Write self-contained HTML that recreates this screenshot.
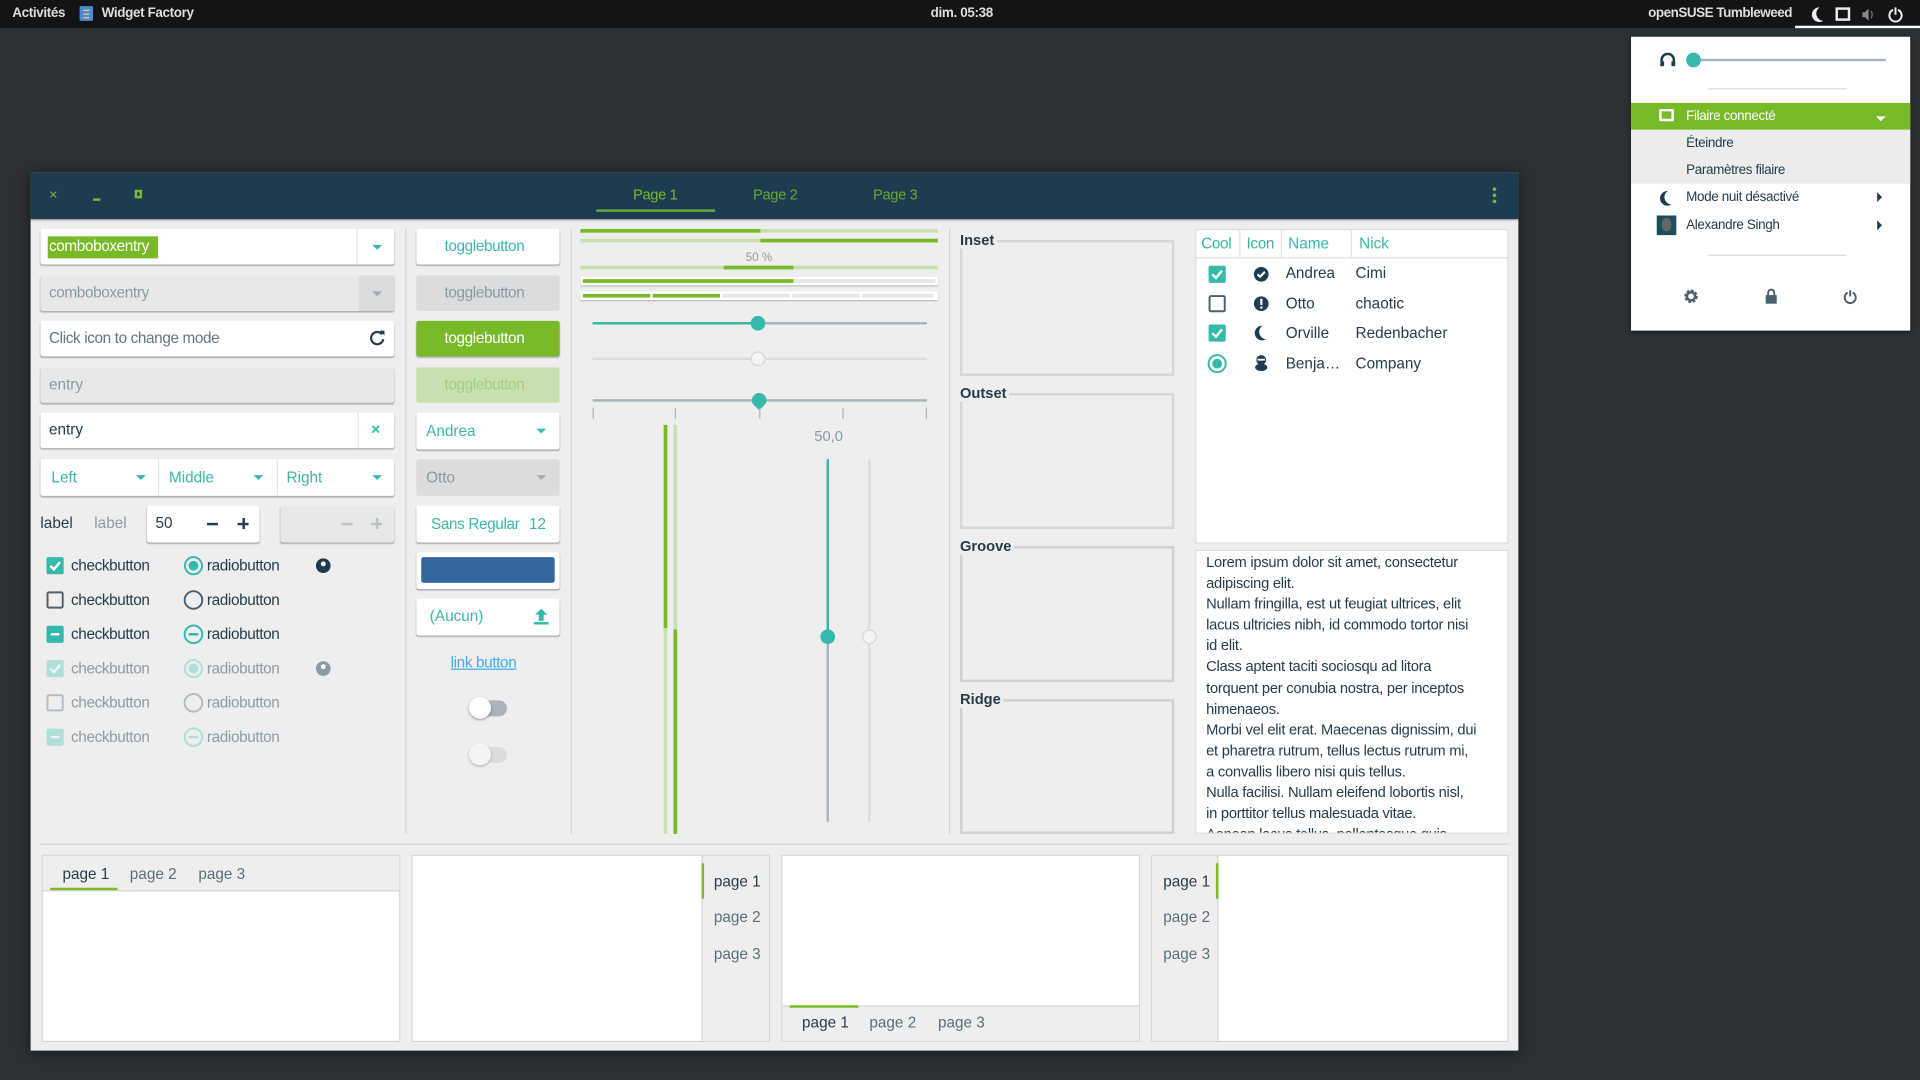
<!DOCTYPE html>
<html><head><meta charset="utf-8"><style>
*{box-sizing:border-box;margin:0;padding:0}
html,body{width:1920px;height:1080px;overflow:hidden;background:#2c3134}
#s{position:absolute;left:0;top:0;width:1568px;height:882px;transform:scale(1.22449);transform-origin:0 0;font-family:"Liberation Sans",sans-serif;font-size:12px;color:#243c4b}
.a{position:absolute}
.t{position:absolute;white-space:nowrap;line-height:1}
.en{position:absolute;background:#fff;box-shadow:0 1px 1px rgba(0,0,0,.28);border-radius:2px}
.dis{background:#e8e8e8}
.tl{color:#3bb6a8}
.g{color:#8a9aa3}
.arr{position:absolute;width:0;height:0;border-left:4px solid transparent;border-right:4px solid transparent;border-top:4px solid #3bb6a8}
.vs{position:absolute;width:1px;background:#d2d4d5}
.fr{position:absolute;border:2px solid #d0d0d0;left:784px;width:175px}
.fl{position:absolute;left:784px;font-weight:bold;font-size:12px;background:#eee;padding-right:2px}
</style></head><body><div id="s">
<!-- top bar -->
<div class="a" style="left:0;top:0;width:1568px;height:23px;background:#121416"></div>
<div class="t" style="left:10px;top:6px;color:#ddd;font-size:11px;font-weight:bold;letter-spacing:-0.3px">Activités</div>
<div class="a" style="left:65px;top:5px;width:11px;height:12px;background:#4a8ad6;border-radius:1px"></div>
<div class="a" style="left:68px;top:8px;width:5px;height:1px;background:#f3d36b;box-shadow:0 3px 0 #f3d36b,0 6px 0 #f3d36b"></div>
<div class="t" style="left:83px;top:6px;color:#ddd;font-size:11px;font-weight:bold;letter-spacing:-0.3px">Widget Factory</div>
<div class="t" style="left:760px;top:6px;color:#ddd;font-size:11px;font-weight:bold;letter-spacing:-0.3px">dim. 05:38</div>
<div class="t" style="left:1346px;top:6px;color:#ddd;font-size:11px;font-weight:bold;letter-spacing:-0.4px">openSUSE Tumbleweed</div>
<svg class="a" style="left:1476px;top:4px" width="90" height="16"><path d="M10 2a6 6 0 1 0 3 11A6 6 0 0 1 10 2z" fill="#eee"/><rect x="24" y="3" width="10" height="9" fill="none" stroke="#eee" stroke-width="2"/><path d="M45 6h2l3-3v10l-3-3h-2z" fill="#888"/><path d="M52 5q2 3 0 6" stroke="#777" fill="none"/><path d="M70 4a5 5 0 1 0 4 0" stroke="#eee" stroke-width="1.6" fill="none"/><path d="M72 2v6" stroke="#eee" stroke-width="1.6"/></svg>
<div class="a" style="left:1466px;top:21px;width:102px;height:2px;background:#fff"></div>

<!-- window -->
<div class="a" style="left:25px;top:141px;width:1215px;height:717px;background:#eeeeee;box-shadow:0 2px 12px rgba(0,0,0,.5)"></div>
<div class="a" style="left:25px;top:141px;width:1215px;height:38px;background:#1b3d4f;box-shadow:0 1px 2px rgba(0,0,0,.3)"></div>
<div class="t" style="left:40px;top:153px;color:#79b93a;font-size:12px">×</div>
<div class="a" style="left:76px;top:162px;width:6px;height:2px;background:#79b93a"></div>
<div class="a" style="left:110px;top:155px;width:6px;height:7px;border:2px solid #79b93a"></div>
<div class="t" style="left:517px;top:153px;color:#79b93a;font-size:12px;letter-spacing:-0.3px">Page 1</div>
<div class="t" style="left:615px;top:153px;color:#6da33a;font-size:12px;letter-spacing:-0.3px">Page 2</div>
<div class="t" style="left:713px;top:153px;color:#6da33a;font-size:12px;letter-spacing:-0.3px">Page 3</div>
<div class="a" style="left:487px;top:171px;width:97px;height:2px;background:#6fa83a"></div>
<div class="a" style="left:1219px;top:153px;width:3px;height:3px;background:#79b93a;box-shadow:0 5px 0 #79b93a,0 10px 0 #79b93a;border-radius:50%"></div>

<!-- col1 -->
<div class="en" style="left:33px;top:187px;width:289px;height:29px"></div>
<div class="a" style="left:39px;top:193px;width:90px;height:18px;background:#78b928"></div>
<div class="t" style="left:40px;top:195px;color:#fff;font-size:12.5px;letter-spacing:-0.3px">comboboxentry</div>
<div class="a" style="left:291px;top:187px;width:1px;height:29px;background:#e4e4e4"></div>
<div class="arr" style="left:304px;top:200px"></div>

<div class="en dis" style="left:33px;top:225px;width:289px;height:29px"></div>
<div class="a" style="left:293px;top:225px;width:29px;height:29px;background:#dadcdd"></div>
<div class="t g" style="left:40px;top:233px;font-size:12.5px;letter-spacing:-0.3px">comboboxentry</div>
<div class="arr" style="left:304px;top:238px;border-top-color:#a4acb1"></div>

<div class="en" style="left:33px;top:262px;width:289px;height:29px"></div>
<div class="t" style="left:40px;top:270px;font-size:12.5px;color:#657580;letter-spacing:-0.3px">Click icon to change mode</div>
<svg class="a" style="left:301px;top:269px" width="14" height="14"><path d="M11 4A5 5 0 1 0 12 8" stroke="#243c4b" stroke-width="1.8" fill="none"/><path d="M9 1l4 0 0 4z" fill="#243c4b"/></svg>

<div class="en dis" style="left:33px;top:300px;width:289px;height:29px"></div>
<div class="t g" style="left:40px;top:308px;font-size:12.5px">entry</div>

<div class="en" style="left:33px;top:337px;width:289px;height:29px"></div>
<div class="a" style="left:292px;top:337px;width:1px;height:29px;background:#e4e4e4"></div>
<div class="t" style="left:40px;top:345px;font-size:12.5px">entry</div>
<div class="t tl" style="left:303px;top:344px;font-size:13px;font-weight:bold">×</div>

<div class="en" style="left:33px;top:375px;width:289px;height:30px"></div>
<div class="a" style="left:129px;top:375px;width:1px;height:30px;background:#e4e4e4"></div>
<div class="a" style="left:226px;top:375px;width:1px;height:30px;background:#e4e4e4"></div>
<div class="t tl" style="left:42px;top:384px;font-size:12.5px">Left</div><div class="arr" style="left:111px;top:388px"></div>
<div class="t tl" style="left:138px;top:384px;font-size:12.5px">Middle</div><div class="arr" style="left:207px;top:388px"></div>
<div class="t tl" style="left:234px;top:384px;font-size:12.5px">Right</div><div class="arr" style="left:304px;top:388px"></div>

<div class="t" style="left:33px;top:421px;font-size:12.5px">label</div>
<div class="t g" style="left:77px;top:421px;font-size:12.5px">label</div>
<div class="en" style="left:120px;top:413px;width:92px;height:30px"></div>
<div class="t" style="left:127px;top:421px;font-size:12.5px">50</div>
<div class="a" style="left:169px;top:427px;width:9px;height:1.5px;background:#243c4b"></div>
<div class="a" style="left:194px;top:427px;width:9px;height:1.5px;background:#243c4b"></div><div class="a" style="left:198px;top:423px;width:1.5px;height:9px;background:#243c4b"></div>
<div class="en dis" style="left:229px;top:413px;width:93px;height:30px"></div>
<div class="a" style="left:279px;top:427px;width:9px;height:1.5px;background:#bcc3c7"></div>
<div class="a" style="left:303px;top:427px;width:9px;height:1.5px;background:#bcc3c7"></div><div class="a" style="left:307px;top:423px;width:1.5px;height:9px;background:#bcc3c7"></div>

<!-- checks -->
<svg class="a" style="left:36px;top:453px" width="250" height="160">
<g font-family="Liberation Sans" font-size="12.5" fill="#243c4b" letter-spacing="-0.3">
<rect x="2" y="2" width="14" height="14" rx="1.5" fill="#35b9ab"/><path d="M5 9l3 3 5-6" stroke="#fff" stroke-width="2" fill="none"/>
<text x="22" y="13">checkbutton</text>
<circle cx="122" cy="9" r="7" fill="none" stroke="#35b9ab" stroke-width="1.6"/><circle cx="122" cy="9" r="4" fill="#35b9ab"/>
<text x="133" y="13">radiobutton</text>
<circle cx="228" cy="9" r="6" fill="#1b3d4f"/><circle cx="228" cy="7.5" r="2" fill="#fff"/>
<rect x="2.8" y="30.8" width="12.4" height="12.4" rx="1" fill="none" stroke="#4a6170" stroke-width="1.6"/><text x="22" y="41">checkbutton</text>
<circle cx="122" cy="37" r="7.2" fill="none" stroke="#4a6170" stroke-width="1.6"/><text x="133" y="41">radiobutton</text>
<rect x="2" y="58" width="14" height="14" rx="1.5" fill="#35b9ab"/><rect x="5.5" y="64" width="7" height="2" fill="#fff"/><text x="22" y="69">checkbutton</text>
<circle cx="122" cy="65" r="7.2" fill="none" stroke="#35b9ab" stroke-width="1.6"/><rect x="118" y="64" width="8" height="2" fill="#35b9ab"/><text x="133" y="69">radiobutton</text>
</g>
<g font-family="Liberation Sans" font-size="12.5" fill="#8d9ca4" letter-spacing="-0.3">
<rect x="2" y="86" width="14" height="14" rx="1.5" fill="#b0ded8"/><path d="M5 93l3 3 5-6" stroke="#e8f6f4" stroke-width="2" fill="none"/><text x="22" y="97">checkbutton</text>
<circle cx="122" cy="93" r="7" fill="none" stroke="#b0ded8" stroke-width="1.6"/><circle cx="122" cy="93" r="4" fill="#b0ded8"/><text x="133" y="97">radiobutton</text>
<circle cx="228" cy="93" r="6" fill="#8a9ba3"/><circle cx="228" cy="91.5" r="2" fill="#fff"/>
<rect x="2.8" y="114.8" width="12.4" height="12.4" rx="1" fill="none" stroke="#b3bcc1" stroke-width="1.6"/><text x="22" y="125">checkbutton</text>
<circle cx="122" cy="121" r="7.2" fill="none" stroke="#b3bcc1" stroke-width="1.6"/><text x="133" y="125">radiobutton</text>
<rect x="2" y="142" width="14" height="14" rx="1.5" fill="#b0ded8"/><rect x="5.5" y="148" width="7" height="2" fill="#e8f6f4"/><text x="22" y="153">checkbutton</text>
<circle cx="122" cy="149" r="7.2" fill="none" stroke="#b0ded8" stroke-width="1.6"/><rect x="118" y="148" width="8" height="2" fill="#b0ded8"/><text x="133" y="153">radiobutton</text>
</g></svg>

<div class="vs" style="left:331px;top:187px;height:494px"></div>
<div class="vs" style="left:466px;top:187px;height:494px"></div>
<div class="vs" style="left:775px;top:187px;height:494px"></div>

<!-- col2 -->
<div class="en" style="left:340px;top:187px;width:117px;height:29px"></div><div class="t tl" style="left:363px;top:195px;font-size:12.5px;letter-spacing:-0.3px">togglebutton</div>
<div class="a" style="left:340px;top:225px;width:117px;height:29px;background:#dadcdd;border-radius:2px"></div><div class="t g" style="left:363px;top:233px;font-size:12.5px;letter-spacing:-0.3px">togglebutton</div>
<div class="a" style="left:340px;top:262px;width:117px;height:29px;background:#78b928;border-radius:2px;box-shadow:0 1px 1px rgba(0,0,0,.25)"></div><div class="t" style="left:363px;top:270px;font-size:12.5px;color:#fff;letter-spacing:-0.3px">togglebutton</div>
<div class="a" style="left:340px;top:300px;width:117px;height:29px;background:#c8e0b0;border-radius:2px"></div><div class="t" style="left:363px;top:308px;font-size:12.5px;color:#a3cf7a;letter-spacing:-0.3px">togglebutton</div>
<div class="en" style="left:340px;top:337px;width:117px;height:30px"></div><div class="t tl" style="left:348px;top:346px;font-size:12.5px">Andrea</div><div class="arr" style="left:438px;top:350px"></div>
<div class="a" style="left:340px;top:375px;width:117px;height:30px;background:#dadcdd;border-radius:2px"></div><div class="t g" style="left:348px;top:384px;font-size:12.5px">Otto</div><div class="arr" style="left:438px;top:388px;border-top-color:#a4acb1"></div>
<div class="en" style="left:340px;top:413px;width:117px;height:30px"></div><div class="t tl" style="left:352px;top:422px;font-size:12.5px;letter-spacing:-0.3px">Sans Regular</div><div class="t tl" style="left:432px;top:422px;font-size:12.5px">12</div>
<div class="en" style="left:340px;top:451px;width:117px;height:30px"></div><div class="a" style="left:344px;top:455px;width:109px;height:21px;background:#3467a0;border-radius:2px"></div>
<div class="en" style="left:340px;top:489px;width:117px;height:30px"></div><div class="t tl" style="left:351px;top:497px;font-size:12.5px">(Aucun)</div>
<svg class="a" style="left:435px;top:496px" width="14" height="16"><path d="M7 1l-5 5h3v5h4V6h3z" fill="#35b9ab"/><rect x="1" y="12" width="12" height="2" fill="#35b9ab"/></svg>
<div class="t" style="left:368px;top:535px;font-size:12.5px;color:#3daee9;text-decoration:underline;letter-spacing:-0.3px">link button</div>
<div class="a" style="left:384px;top:572px;width:30px;height:13px;border-radius:7px;background:#a9b4ba"></div><div class="a" style="left:383px;top:569px;width:18px;height:18px;border-radius:50%;background:#fff;box-shadow:0 1px 2px rgba(0,0,0,.35)"></div>
<div class="a" style="left:384px;top:610px;width:30px;height:13px;border-radius:7px;background:#dadcdd"></div><div class="a" style="left:383px;top:607px;width:18px;height:18px;border-radius:50%;background:#f4f4f4;box-shadow:0 1px 2px rgba(0,0,0,.25)"></div>

<!-- col3 -->
<div class="a" style="left:474px;top:187px;width:292px;height:3px;background:#c9e0b2"></div><div class="a" style="left:474px;top:187px;width:147px;height:3px;background:#78b928"></div>
<div class="a" style="left:474px;top:195px;width:292px;height:3px;background:#c9e0b2"></div><div class="a" style="left:621px;top:195px;width:145px;height:3px;background:#78b928"></div>
<div class="t" style="left:609px;top:206px;font-size:9.5px;color:#8a9aa3">50 %</div>
<div class="a" style="left:474px;top:217px;width:292px;height:3px;background:#c9e0b2"></div><div class="a" style="left:591px;top:217px;width:57px;height:3px;background:#78b928"></div>
<div class="a" style="left:474px;top:226px;width:292px;height:7px;background:#fff;box-shadow:0 1px 1px rgba(0,0,0,.25)"></div><div class="a" style="left:476px;top:228px;width:288px;height:3px;background:#e4e6e7"></div><div class="a" style="left:476px;top:228px;width:172px;height:3px;background:#78b928"></div>
<div class="a" style="left:474px;top:238px;width:292px;height:7px;background:#fff;box-shadow:0 1px 1px rgba(0,0,0,.25)"></div>
<div class="a" style="left:476px;top:240px;width:55px;height:3px;background:#78b928"></div><div class="a" style="left:533px;top:240px;width:55px;height:3px;background:#78b928"></div>
<div class="a" style="left:590px;top:240px;width:55px;height:3px;background:#e4e6e7"></div><div class="a" style="left:647px;top:240px;width:55px;height:3px;background:#e4e6e7"></div><div class="a" style="left:704px;top:240px;width:58px;height:3px;background:#e4e6e7"></div>
<div class="a" style="left:484px;top:263px;width:273px;height:2px;background:#a9b4ba"></div><div class="a" style="left:484px;top:263px;width:135px;height:2px;background:#35b9ab"></div>
<div class="a" style="left:613px;top:258px;width:12px;height:12px;border-radius:50%;background:#35b9ab"></div>
<div class="a" style="left:484px;top:292px;width:273px;height:2px;background:#dadcdd"></div>
<div class="a" style="left:613px;top:287px;width:12px;height:12px;border-radius:50%;background:#f4f4f4;border:1.5px solid #d4d7d9"></div>
<div class="a" style="left:484px;top:326px;width:273px;height:2px;background:#a9b4ba"></div>
<svg class="a" style="left:612px;top:320px" width="16" height="16"><path d="M8 1a6 6 0 0 1 6 6c0 3-3 5-6 8-3-3-6-5-6-8a6 6 0 0 1 6-6z" fill="#35b9ab"/></svg>
<div class="a" style="left:484px;top:333px;width:1px;height:9px;background:#a9b4ba;box-shadow:67px 0 0 #a9b4ba,136px 0 0 #a9b4ba,204px 0 0 #a9b4ba,272px 0 0 #a9b4ba"></div>
<div class="t" style="left:665px;top:350px;font-size:12px;color:#8a9aa3">50,0</div>
<div class="a" style="left:542px;top:347px;width:3px;height:334px;background:#c9e0b2"></div><div class="a" style="left:542px;top:347px;width:3px;height:166px;background:#78b928"></div>
<div class="a" style="left:550px;top:347px;width:3px;height:334px;background:#c9e0b2"></div><div class="a" style="left:550px;top:514px;width:3px;height:167px;background:#78b928"></div>
<div class="a" style="left:675px;top:375px;width:2px;height:296px;background:#a9b4ba"></div><div class="a" style="left:675px;top:375px;width:2px;height:145px;background:#35b9ab"></div>
<div class="a" style="left:670px;top:514px;width:12px;height:12px;border-radius:50%;background:#35b9ab"></div>
<div class="a" style="left:709px;top:375px;width:2px;height:296px;background:#dadcdd"></div>
<div class="a" style="left:704px;top:514px;width:12px;height:12px;border-radius:50%;background:#f4f4f4;border:1.5px solid #d4d7d9"></div>

<!-- frames -->
<div class="fr" style="top:196px;height:111px;border-color:#d6d6d6"></div><div class="fl" style="top:189px">Inset</div>
<div class="fr" style="top:321px;height:111px;border-color:#d6d6d6"></div><div class="fl" style="top:314px">Outset</div>
<div class="fr" style="top:446px;height:111px"></div><div class="fl" style="top:439px">Groove</div>
<div class="fr" style="top:571px;height:110px"></div><div class="fl" style="top:564px">Ridge</div>

<!-- tree -->
<div class="a" style="left:976px;top:187px;width:256px;height:257px;background:#fff;border:1px solid #dcdcdc"></div>
<div class="a" style="left:976px;top:210px;width:256px;height:1px;background:#dcdcdc"></div>
<div class="a" style="left:1012px;top:188px;width:1px;height:22px;background:#e2e2e2;box-shadow:34px 0 0 #e2e2e2,91px 0 0 #e2e2e2"></div>
<div class="t tl" style="left:981px;top:193px;font-size:12.5px;letter-spacing:-0.3px">Cool</div><div class="t tl" style="left:1018px;top:193px;font-size:12.5px;letter-spacing:-0.3px">Icon</div><div class="t tl" style="left:1052px;top:193px;font-size:12.5px">Name</div><div class="t tl" style="left:1110px;top:193px;font-size:12.5px">Nick</div>
<svg class="a" style="left:985px;top:214px" width="60" height="92">
<rect x="2" y="3" width="14" height="14" rx="1.5" fill="#35b9ab"/><path d="M5 10l3 3 5-6" stroke="#fff" stroke-width="2" fill="none"/>
<circle cx="45" cy="10" r="6" fill="#1b3d4f"/><path d="M42 10l2 2 4-4" stroke="#fff" stroke-width="1.8" fill="none"/>
<rect x="2.8" y="27.8" width="12.4" height="12.4" rx="1" fill="none" stroke="#4a6170" stroke-width="1.6"/>
<circle cx="45" cy="34" r="6" fill="#1b3d4f"/><rect x="44.2" y="30" width="1.8" height="5" fill="#fff"/><rect x="44.2" y="36.3" width="1.8" height="1.8" fill="#fff"/>
<rect x="2" y="51" width="14" height="14" rx="1.5" fill="#35b9ab"/><path d="M5 58l3 3 5-6" stroke="#fff" stroke-width="2" fill="none"/>
<path d="M46 52a6 6 0 1 0 3 11A6 6 0 0 1 46 52z" fill="#1b3d4f"/>
<circle cx="9" cy="83" r="7" fill="none" stroke="#35b9ab" stroke-width="1.6"/><circle cx="9" cy="83" r="4" fill="#35b9ab"/>
<circle cx="45" cy="80" r="4" fill="#1b3d4f"/><ellipse cx="45" cy="86" rx="5" ry="3" fill="#1b3d4f"/><rect x="42" y="79" width="6" height="1.5" fill="#fff"/>
</svg>
<div class="t" style="left:1050px;top:217px;font-size:12.5px">Andrea</div><div class="t" style="left:1107px;top:217px;font-size:12.5px">Cimi</div>
<div class="t" style="left:1050px;top:242px;font-size:12.5px">Otto</div><div class="t" style="left:1107px;top:242px;font-size:12.5px">chaotic</div>
<div class="t" style="left:1050px;top:266px;font-size:12.5px">Orville</div><div class="t" style="left:1107px;top:266px;font-size:12.5px">Redenbacher</div>
<div class="t" style="left:1050px;top:291px;font-size:12.5px">Benja…</div><div class="t" style="left:1107px;top:291px;font-size:12.5px">Company</div>

<div class="a" style="left:976px;top:449px;width:256px;height:232px;background:#fff;border:1px solid #dcdcdc;overflow:hidden">
<div style="position:absolute;left:8px;top:1px;width:240px;font-size:12px;line-height:17.1px;color:#243c4b;letter-spacing:-0.2px">Lorem ipsum dolor sit amet, consectetur adipiscing elit.<br>Nullam fringilla, est ut feugiat ultrices, elit<br>lacus ultricies nibh, id commodo tortor nisi<br>id elit.<br>Class aptent taciti sociosqu ad litora<br>torquent per conubia nostra, per inceptos<br>himenaeos.<br>Morbi vel elit erat. Maecenas dignissim, dui<br>et pharetra rutrum, tellus lectus rutrum mi,<br>a convallis libero nisi quis tellus.<br>Nulla facilisi. Nullam eleifend lobortis nisl,<br>in porttitor tellus malesuada vitae.<br>Aenean lacus tellus, pellentesque quis</div></div>

<div class="a" style="left:33px;top:689px;width:1199px;height:1px;background:#d2d4d5"></div>

<!-- notebooks -->
<div class="a" style="left:34px;top:698px;width:293px;height:153px;background:#fff;border:1px solid #d6d6d6"></div>
<div class="a" style="left:35px;top:699px;width:291px;height:29px;background:#eee;border-bottom:1px solid #d6d6d6"></div>
<div class="a" style="left:41px;top:725px;width:55px;height:2px;background:#78b928"></div>
<div class="t" style="left:51px;top:708px;font-size:12.5px">page 1</div><div class="t" style="left:106px;top:708px;font-size:12.5px;color:#5a6e7a">page 2</div><div class="t" style="left:162px;top:708px;font-size:12.5px;color:#5a6e7a">page 3</div>

<div class="a" style="left:336px;top:698px;width:293px;height:153px;background:#fff;border:1px solid #d6d6d6"></div>
<div class="a" style="left:573px;top:699px;width:55px;height:151px;background:#eee;border-left:1px solid #d6d6d6"></div>
<div class="a" style="left:573px;top:705px;width:2px;height:29px;background:#78b928"></div>
<div class="t" style="left:583px;top:714px;font-size:12.5px">page 1</div><div class="t" style="left:583px;top:743px;font-size:12.5px;color:#5a6e7a">page 2</div><div class="t" style="left:583px;top:773px;font-size:12.5px;color:#5a6e7a">page 3</div>

<div class="a" style="left:638px;top:698px;width:293px;height:153px;background:#fff;border:1px solid #d6d6d6"></div>
<div class="a" style="left:639px;top:821px;width:291px;height:29px;background:#eee;border-top:1px solid #d6d6d6"></div>
<div class="a" style="left:645px;top:821px;width:56px;height:2px;background:#78b928"></div>
<div class="t" style="left:655px;top:829px;font-size:12.5px">page 1</div><div class="t" style="left:710px;top:829px;font-size:12.5px;color:#5a6e7a">page 2</div><div class="t" style="left:766px;top:829px;font-size:12.5px;color:#5a6e7a">page 3</div>

<div class="a" style="left:940px;top:698px;width:292px;height:153px;background:#fff;border:1px solid #d6d6d6"></div>
<div class="a" style="left:941px;top:699px;width:54px;height:151px;background:#eee;border-right:1px solid #d6d6d6"></div>
<div class="a" style="left:993px;top:705px;width:2px;height:29px;background:#78b928"></div>
<div class="t" style="left:950px;top:714px;font-size:12.5px">page 1</div><div class="t" style="left:950px;top:743px;font-size:12.5px;color:#5a6e7a">page 2</div><div class="t" style="left:950px;top:773px;font-size:12.5px;color:#5a6e7a">page 3</div>

<!-- popover -->
<div class="a" style="left:1332px;top:30px;width:228px;height:240px;background:#fff;box-shadow:0 1px 4px rgba(0,0,0,.5)"></div>
<svg class="a" style="left:1355px;top:43px" width="14" height="12"><path d="M2 11V6a5 5 0 0 1 10 0v5" stroke="#1b3d4f" stroke-width="2" fill="none"/><rect x="1" y="7" width="3" height="4" fill="#1b3d4f"/><rect x="10" y="7" width="3" height="4" fill="#1b3d4f"/></svg>
<div class="a" style="left:1384px;top:48px;width:156px;height:2px;background:#a9b4ba"></div>
<div class="a" style="left:1377px;top:43px;width:12px;height:12px;border-radius:50%;background:#35b9ab"></div>
<div class="a" style="left:1395px;top:72px;width:113px;height:1px;background:#dadcdd"></div>
<div class="a" style="left:1332px;top:84px;width:228px;height:22px;background:#78b928"></div>
<div class="a" style="left:1355px;top:89px;width:12px;height:10px;border:2px solid #fff;border-radius:1px"></div>
<div class="t" style="left:1377px;top:90px;color:#fff;font-size:11px;letter-spacing:-0.3px">Filaire connecté</div>
<div class="arr" style="left:1532px;top:95px;border-top-color:#fff"></div>
<div class="a" style="left:1332px;top:106px;width:228px;height:44px;background:#ececec"></div>
<div class="t" style="left:1377px;top:112px;font-size:11px;letter-spacing:-0.3px">Éteindre</div>
<div class="t" style="left:1377px;top:134px;font-size:11px;letter-spacing:-0.3px">Paramètres filaire</div>
<svg class="a" style="left:1354px;top:155px" width="12" height="14"><path d="M8 1a6 6 0 1 0 3 11A6 6 0 0 1 8 1z" fill="#1b3d4f"/></svg>
<div class="t" style="left:1377px;top:156px;font-size:11px;letter-spacing:-0.3px">Mode nuit désactivé</div>
<div class="a" style="left:1533px;top:157px;border-top:4px solid transparent;border-bottom:4px solid transparent;border-left:4px solid #1b3d4f"></div>
<div class="a" style="left:1353px;top:176px;width:16px;height:16px;background:#1e4d5a"><div style="position:absolute;left:4px;top:2px;width:8px;height:11px;border-radius:45%;background:#666"></div></div>
<div class="t" style="left:1377px;top:179px;font-size:11px;letter-spacing:-0.3px">Alexandre Singh</div>
<div class="a" style="left:1533px;top:180px;border-top:4px solid transparent;border-bottom:4px solid transparent;border-left:4px solid #1b3d4f"></div>
<div class="a" style="left:1395px;top:208px;width:113px;height:1px;background:#dadcdd"></div>
<svg class="a" style="left:1374px;top:235px" width="150" height="14"><circle cx="7" cy="7" r="4" fill="none" stroke="#4a6170" stroke-width="3" stroke-dasharray="2 1.1"/><circle cx="7" cy="7" r="3.3" fill="none" stroke="#4a6170" stroke-width="2"/><rect x="68" y="6" width="9" height="7" fill="#4a6170"/><path d="M70 7V4a2.5 2.5 0 0 1 5 0v3" stroke="#4a6170" stroke-width="1.6" fill="none"/><path d="M135 4a4.5 4.5 0 1 0 4 0" stroke="#4a6170" stroke-width="1.6" fill="none"/><path d="M137 2v5" stroke="#4a6170" stroke-width="1.6"/></svg>
</div></body></html>
